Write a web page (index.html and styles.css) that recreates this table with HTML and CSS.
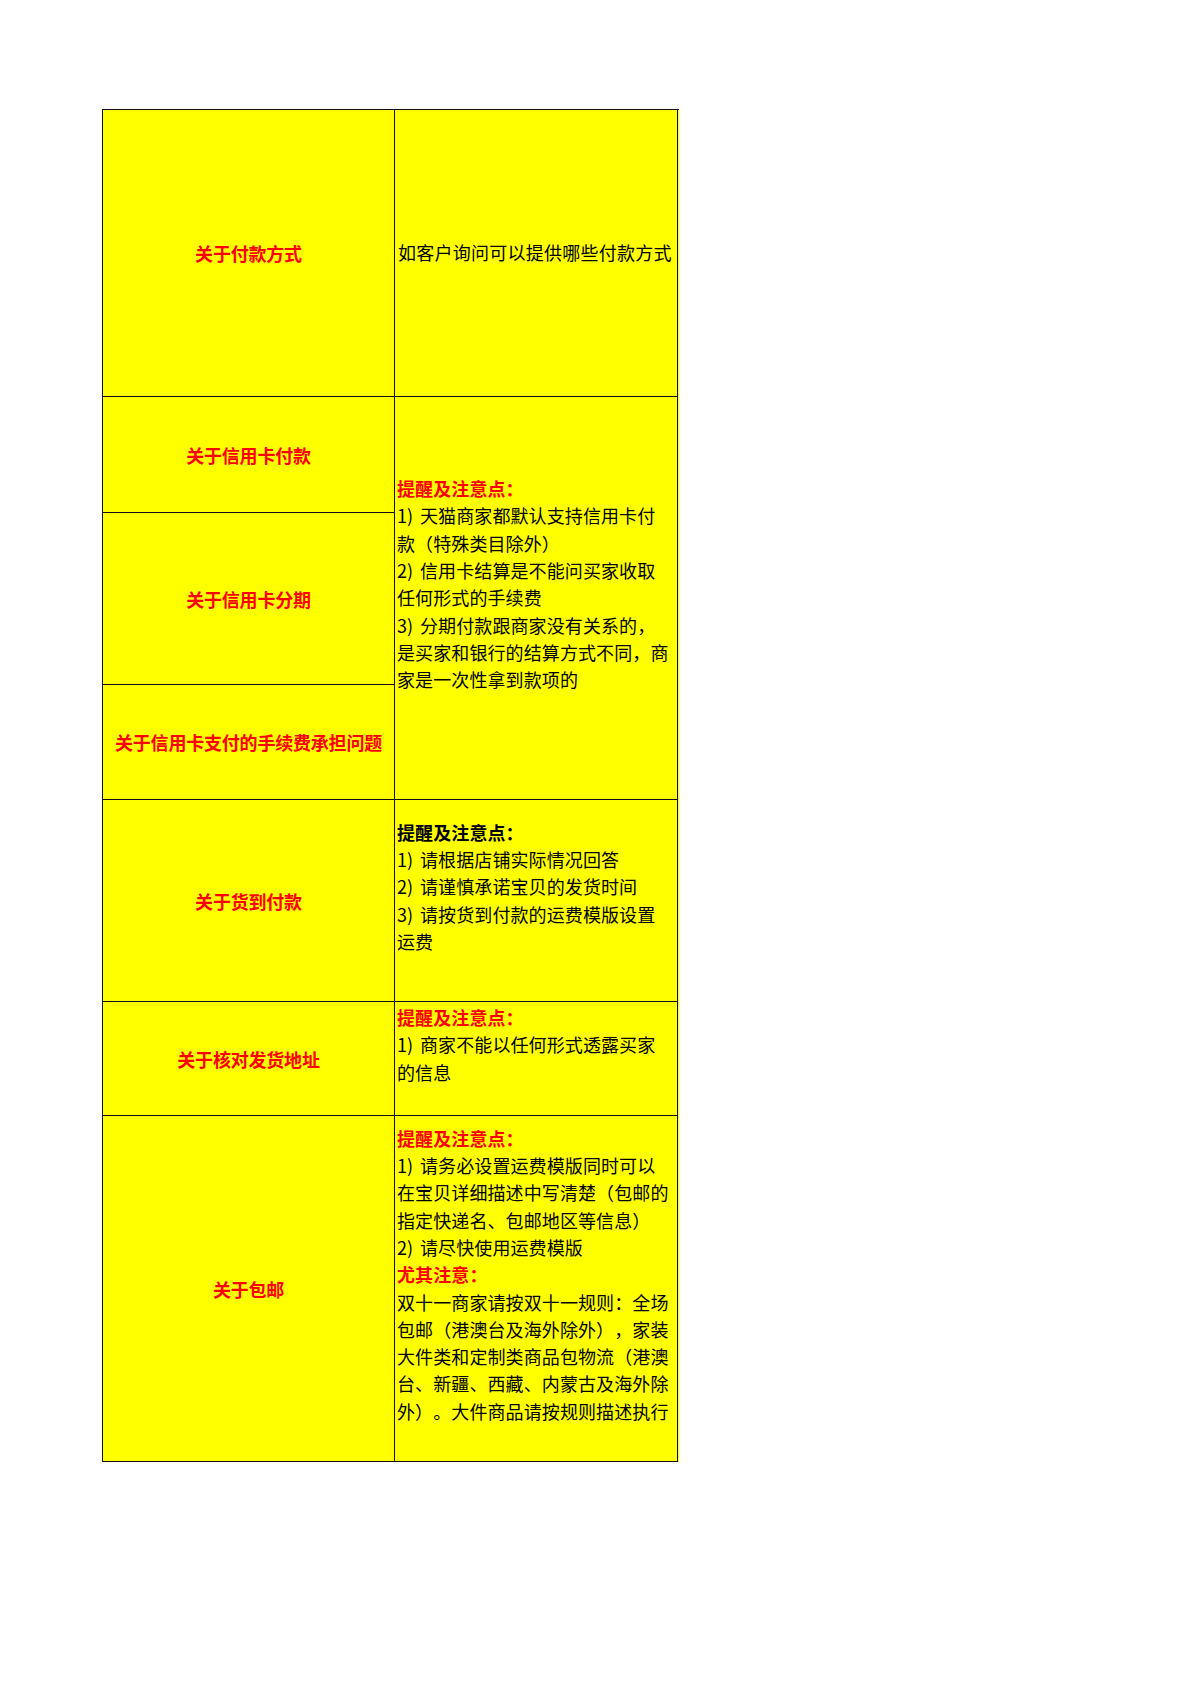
FILE: index.html
```html
<!DOCTYPE html>
<html lang="zh-CN">
<head>
<meta charset="utf-8">
<title>付款方式</title>
<link rel="stylesheet" href="styles.css">
</head>
<body>
<div class="sheet">
  <div class="cell topic r1">关于付款方式</div>
  <div class="cell note r1c2"><div class="txt plain">如客户询问可以提供哪些付款方式</div></div>

  <div class="cell topic r2">关于信用卡付款</div>
  <div class="cell note r234">
    <div class="txt"><span class="hd red">提醒及注意点：</span><br><span class="n">1)</span>天猫商家都默认支持信用卡付<br>款（特殊类目除外）<br><span class="n">2)</span>信用卡结算是不能问买家收取<br>任何形式的手续费<br><span class="n">3)</span>分期付款跟商家没有关系的，<br>是买家和银行的结算方式不同，商<br>家是一次性拿到款项的</div>
  </div>
  <div class="cell topic r3">关于信用卡分期</div>
  <div class="cell topic r4">关于信用卡支付的手续费承担问题</div>

  <div class="cell topic r5">关于货到付款</div>
  <div class="cell note r5c2">
    <div class="txt"><span class="hd">提醒及注意点：</span><br><span class="n">1)</span>请根据店铺实际情况回答<br><span class="n">2)</span>请谨慎承诺宝贝的发货时间<br><span class="n">3)</span>请按货到付款的运费模版设置<br>运费</div>
  </div>

  <div class="cell topic r6">关于核对发货地址</div>
  <div class="cell note r6c2">
    <div class="txt"><span class="hd red">提醒及注意点：</span><br><span class="n">1)</span>商家不能以任何形式透露买家<br>的信息</div>
  </div>

  <div class="cell topic r7">关于包邮</div>
  <div class="cell note r7c2">
    <div class="txt"><span class="hd red">提醒及注意点：</span><br><span class="n">1)</span>请务必设置运费模版同时可以<br>在宝贝详细描述中写清楚（包邮的<br>指定快递名、包邮地区等信息）<br><span class="n">2)</span>请尽快使用运费模版<br><span class="hd red">尤其注意：</span><br>双十一商家请按双十一规则：全场<br>包邮（港澳台及海外除外），家装<br>大件类和定制类商品包物流（港澳<br>台、新疆、西藏、内蒙古及海外除<br>外）。大件商品请按规则描述执行</div>
  </div>
</div>
</body>
</html>
```

FILE: styles.css
```css
html, body {
  margin: 0;
  padding: 0;
  background: #ffffff;
}

body {
  padding: 109px 0 0 102px;
  font-family: "Noto Sans CJK SC", "Noto Sans", sans-serif;
  font-size: 18px;
  color: #000000;
  text-spacing-trim: space-all;
}

.sheet {
  display: grid;
  grid-template-columns: 292px 283px;
  grid-template-rows: 287px 116px 172px 115px 202px 114px 346px;
  width: 577px;
  box-sizing: border-box;
  border-left: 1.5px solid #111111;
  border-top: 1.5px solid #111111;
  background: #ffff00;
}

.cell {
  box-sizing: border-box;
  border-right: 1.5px solid #111111;
  border-bottom: 1.5px solid #111111;
  background: #ffff00;
  display: flex;
  flex-direction: column;
  justify-content: center;
  min-width: 0;
  overflow: hidden;
}

.topic {
  align-items: center;
  text-align: center;
  font-weight: 700;
  color: #ff0000;
  white-space: nowrap;
  letter-spacing: -0.2px;
}

.note {
  align-items: stretch;
  padding-left: 2px;
}

.txt {
  line-height: 27.3px;
  white-space: nowrap;
  padding-bottom: 27.3px;
  letter-spacing: 0.1px;
}

.txt.plain {
  padding-bottom: 0;
  padding-left: 1px;
  letter-spacing: 0.25px;
}

.n {
  display: inline-block;
  width: 23px;
}

.hd {
  font-weight: 700;
}

.red {
  color: #ff0000;
}

.r1 { grid-column: 1; grid-row: 1; }
.r1c2 { grid-column: 2; grid-row: 1; }
.r2 { grid-column: 1; grid-row: 2; }
.r3 { grid-column: 1; grid-row: 3; }
.r4 { grid-column: 1; grid-row: 4; }
.r234 { grid-column: 2; grid-row: 2 / span 3; }
.r5 { grid-column: 1; grid-row: 5; }
.r5c2 { grid-column: 2; grid-row: 5; }
.r6 { grid-column: 1; grid-row: 6; }
.r6c2 { grid-column: 2; grid-row: 6; }
.r7 { grid-column: 1; grid-row: 7; }
.r7c2 { grid-column: 2; grid-row: 7; }
```
